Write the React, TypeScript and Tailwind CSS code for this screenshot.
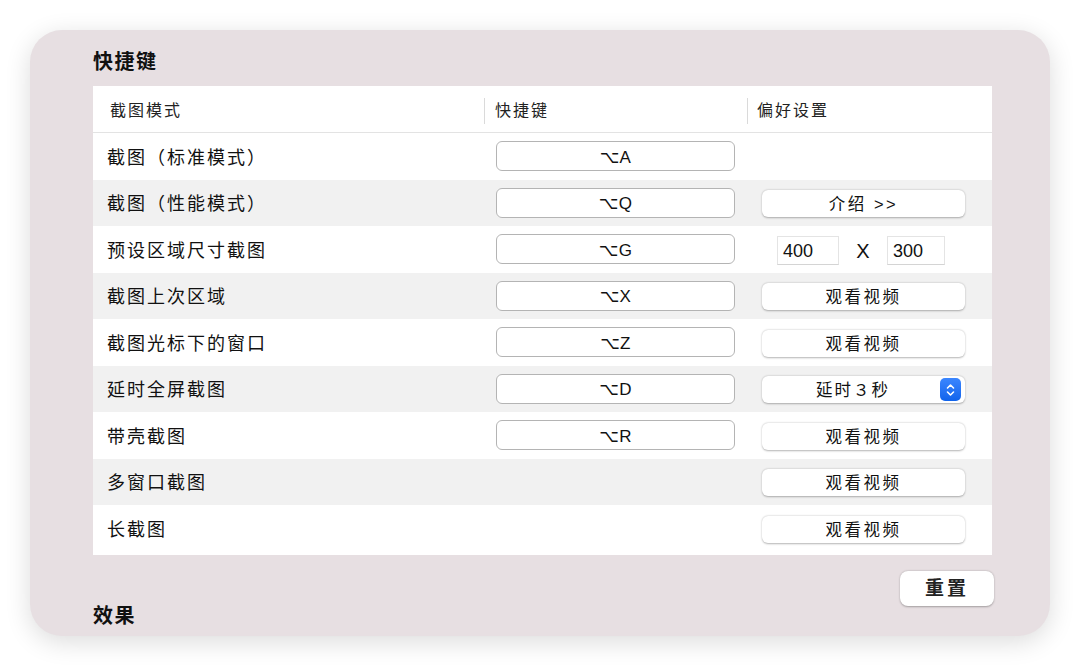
import React from 'react';

const FONT = '"Liberation Sans", "DejaVu Sans", "Noto Sans CJK SC", sans-serif';

type Row = {
  name: string;
  key?: string;
  pref?: 'video' | 'intro' | 'size' | 'delay';
};

const ROWS: Row[] = [
  { name: '截图（标准模式）', key: '⌥A' },
  { name: '截图（性能模式）', key: '⌥Q', pref: 'intro' },
  { name: '预设区域尺寸截图', key: '⌥G', pref: 'size' },
  { name: '截图上次区域', key: '⌥X', pref: 'video' },
  { name: '截图光标下的窗口', key: '⌥Z', pref: 'video' },
  { name: '延时全屏截图', key: '⌥D', pref: 'delay' },
  { name: '带壳截图', key: '⌥R', pref: 'video' },
  { name: '多窗口截图', pref: 'video' },
  { name: '长截图', pref: 'video' },
];

const PrefButton: React.FC<{ children: React.ReactNode }> = ({ children }) => (
  <div className="ml-[15px] mt-[2px] w-[203px] h-[27px] pt-[2px] rounded-[6px] bg-white shadow-[0_0.5px_2px_rgba(0,0,0,0.3)] flex items-center justify-center text-[16.5px] tracking-[2.5px] text-[#111]">
    {children}
  </div>
);

const Stepper = () => (
  <div className="absolute right-[4px] top-[2px] w-[21px] h-[23px] rounded-[5px] bg-gradient-to-b from-[#3b86ff] to-[#0f63eb] flex items-center justify-center">
    <svg width="9" height="14" viewBox="0 0 9 14" fill="none" stroke="white" strokeWidth="1.6" strokeLinecap="round" strokeLinejoin="round">
      <path d="M1.5 5 L4.5 2 L7.5 5" />
      <path d="M1.5 9 L4.5 12 L7.5 9" />
    </svg>
  </div>
);

const Pref: React.FC<{ kind?: Row['pref'] }> = ({ kind }) => {
  if (!kind) return null;
  if (kind === 'intro') return <PrefButton>介绍 &gt;&gt;</PrefButton>;
  if (kind === 'video') return <PrefButton>观看视频</PrefButton>;
  if (kind === 'size')
    return (
      <div className="ml-[30px] mt-[2px] flex items-center text-[18px] text-[#111]">
        <div className="w-[62px] h-[29px] pt-[2px] bg-white border border-[#e4e4e4] border-b-[#d4d4d4] flex items-center pl-[5px]">400</div>
        <div className="w-[48px] pt-[2px] text-center text-[20px]">X</div>
        <div className="w-[58px] h-[29px] pt-[2px] bg-white border border-[#e4e4e4] border-b-[#d4d4d4] flex items-center pl-[5px]">300</div>
      </div>
    );
  return (
    <div className="relative ml-[15px] mt-[2px] w-[203px] h-[27px] pt-[2px] rounded-[6px] bg-white shadow-[0_0.5px_2px_rgba(0,0,0,0.3)] flex items-center text-[16.5px] text-[#111]">
      <span className="ml-[54px] tracking-[2px]">延时３秒</span>
      <Stepper />
    </div>
  );
};

export default function App() {
  return (
    <div className="w-[1080px] h-[666px] bg-white pt-[30px] pl-[30px]" style={{ fontFamily: FONT }}>
      <div className="w-[1020px] h-[606px] rounded-[32px] bg-[#e7dfe2] shadow-[0_6px_26px_rgba(0,0,0,0.14)] pl-[63px] pr-[58px] pt-[19px] overflow-hidden">
        <h2 className="h-[37px] text-[20px] font-bold tracking-[1.5px] text-[#111] leading-[26px]">快捷键</h2>

        <div className="bg-white pb-[3px]">
          <div className="flex h-[47px] pt-[3px] items-center border-b border-[#e3e3e3] text-[16px] tracking-[2px] text-[#222]">
            <div className="w-[391px] pl-[17px]">截图模式</div>
            <div className="w-[263px] flex items-center">
              <div className="w-px h-[26px] bg-[#dadada]" />
              <span className="ml-[10px]">快捷键</span>
            </div>
            <div className="flex-1 flex items-center">
              <div className="w-px h-[26px] bg-[#dadada]" />
              <span className="ml-[9px]">偏好设置</span>
            </div>
          </div>

          {ROWS.map((row, i) => (
            <div
              key={row.name}
              className={`flex h-[46.5px] items-center text-[18px] text-[#111] ${i % 2 === 1 ? 'bg-[#f1f1f1]' : 'bg-white'}`}
            >
              <div className="w-[391px] pl-[14px] pt-[4px] tracking-[2px]">{row.name}</div>
              <div className="w-[263px] pl-[12px]">
                {row.key && (
                  <div className="w-[239px] h-[30px] pt-[2px] rounded-[6px] border border-[#b4b4b4] bg-white flex items-center justify-center text-[17px]">
                    {row.key}
                  </div>
                )}
              </div>
              <div className="flex-1">
                <Pref kind={row.pref} />
              </div>
            </div>
          ))}
        </div>

        <div className="flex justify-between h-[57px] mt-[16px] -mr-[2px]">
          <div className="self-end text-[20px] font-bold tracking-[1.5px] text-[#111] leading-[26px] -mb-[1px]">效果</div>
          <div className="w-[94px] h-[35px] pt-[2px] rounded-[8px] bg-white shadow-[0_0.5px_2px_rgba(0,0,0,0.3)] flex items-center justify-center text-[19px] font-bold tracking-[3px] text-[#222]">
            重置
          </div>
        </div>
      </div>
    </div>
  );
}
